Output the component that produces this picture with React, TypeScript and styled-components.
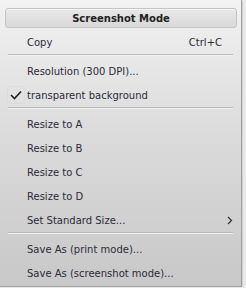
import React from 'react';
import styled, { createGlobalStyle } from 'styled-components';

type Item = { label: string; shortcut?: string; checked?: boolean; submenu?: boolean } | 'sep';

const items: Item[] = [
	{ label: 'Copy', shortcut: 'Ctrl+C' },
	'sep',
	{ label: 'Resolution (300 DPI)...' },
	{ label: 'transparent background', checked: true },
	'sep',
	{ label: 'Resize to A' },
	{ label: 'Resize to B' },
	{ label: 'Resize to C' },
	{ label: 'Resize to D' },
	{ label: 'Set Standard Size...', submenu: true },
	'sep',
	{ label: 'Save As (print mode)...' },
	{ label: 'Save As (screenshot mode)...' },
];

const App: React.FC = () => {
	return (
		<>
			<GlobalStyle />
			<Menu>
				<Title>Screenshot Mode</Title>
				{items.map((item, i) =>
					item === 'sep' ? (
						<Separator key={i} />
					) : (
						<Row key={i}>
							<CheckSlot>
								{item.checked && (
									<CheckBox>
										<svg width="12" height="10" viewBox="0 0 12 10">
											<path d="M1 5 L4.5 8.5 L11 1.5" fill="none" stroke="#222" strokeWidth="1.6" />
										</svg>
									</CheckBox>
								)}
							</CheckSlot>
							<Label>{item.label}</Label>
							{item.shortcut && <Shortcut>{item.shortcut}</Shortcut>}
							{item.submenu && (
								<Arrow>
									<svg width="6" height="9" viewBox="0 0 6 9">
										<path d="M1 1 L4.5 4.5 L1 8" fill="none" stroke="#333" strokeWidth="1.3" />
									</svg>
								</Arrow>
							)}
						</Row>
					)
				)}
			</Menu>
		</>
	);
};

export default App;

const GlobalStyle = createGlobalStyle`
	html, body {
		margin: 0;
		padding: 0;
		background: #e9e9e9;
	}
`;

const Menu = styled.div`
	box-sizing: border-box;
	width: 242px;
	height: 287px;
	padding: 6px 4px 0 4px;
	display: flex;
	flex-direction: column;
	font-family: 'DejaVu Sans', Tahoma, sans-serif;
	font-size: 10px;
	color: #2c2c38;
	background: linear-gradient(to bottom, #f2f2f2 0%, #dcdcdc 45%, #c8c8c8 100%);
	border-right: 1px solid #a0a0a0;
	border-bottom: 1px solid #a0a0a0;
	box-shadow: 1px 1px 0 #d0d0d0;
`;

const Title = styled.div`
	box-sizing: border-box;
	height: 20px;
	margin: 2px 0 2px 1px;
	display: flex;
	align-items: center;
	justify-content: center;
	font-weight: bold;
	color: #222;
	border: 1px solid #c4c4c4;
	border-radius: 3px;
	background: linear-gradient(to bottom, #e8e8e8, #d9d9d9);
	box-shadow: inset 0 1px 0 #f6f6f6;
`;

const Row = styled.div`
	height: 24px;
	display: flex;
	align-items: center;
`;

const CheckSlot = styled.div`
	width: 23px;
	display: flex;
	justify-content: center;
`;

const CheckBox = styled.div`
	width: 16px;
	height: 16px;
	display: flex;
	align-items: center;
	justify-content: center;
	border: 1px solid #dcdcdc;
	border-radius: 3px;
`;

const Label = styled.span`
	flex: 1;
`;

const Shortcut = styled.span`
	margin-right: 15px;
`;

const Arrow = styled.span`
	margin-right: 4px;
	display: flex;
`;

const Separator = styled.div`
	height: 0;
	margin: 0 4px 3px 4px;
	border-top: 1px solid #b8b8b8;
	border-bottom: 1px solid #f2f2f2;
`;
